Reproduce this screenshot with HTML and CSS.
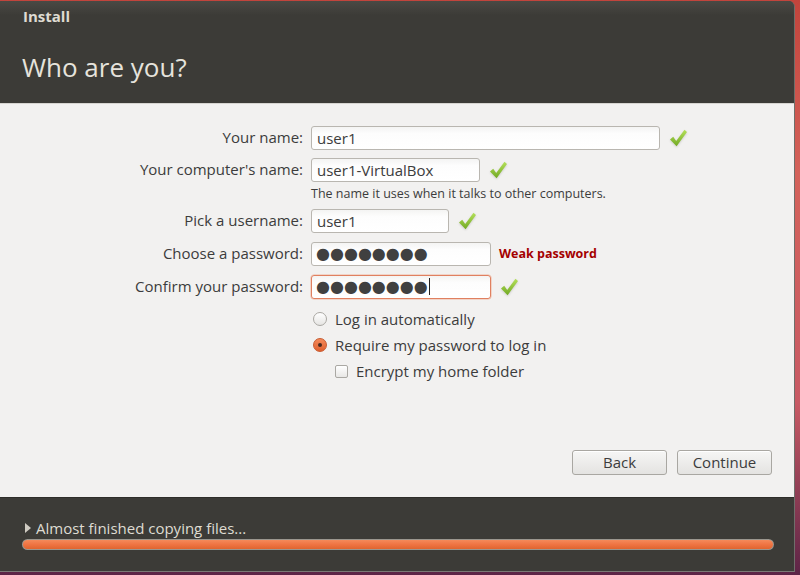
FILE: index.html
```html
<!DOCTYPE html>
<html>
<head>
<meta charset="utf-8">
<link rel="stylesheet" href="styles.css">
</head>
<body>
<div class="window">
  <div class="header">
    <div class="title">Install</div>
    <div class="heading">Who are you?</div>
  </div>
  <div class="content">
    <div class="form">
      <div class="row">
        <div class="label">Your name:</div>
        <div class="field"><div class="entry w-name">user1</div><svg class="check" viewBox="0 0 20 20"><path d="M2 11.5 L5.2 8.8 L8.2 13 L16.5 1.8 L19 4 L8.6 18.2 Z" fill="url(#g)"/></svg></div>
      </div>
      <div class="row">
        <div class="label">Your computer's name:</div>
        <div class="field"><div class="entry w-comp">user1-VirtualBox</div><svg class="check" viewBox="0 0 20 20"><path d="M2 11.5 L5.2 8.8 L8.2 13 L16.5 1.8 L19 4 L8.6 18.2 Z" fill="url(#g)"/></svg></div>
      </div>
      <div class="hint">The name it uses when it talks to other computers.</div>
      <div class="row">
        <div class="label">Pick a username:</div>
        <div class="field"><div class="entry w-user">user1</div><svg class="check" viewBox="0 0 20 20"><path d="M2 11.5 L5.2 8.8 L8.2 13 L16.5 1.8 L19 4 L8.6 18.2 Z" fill="url(#g)"/></svg></div>
      </div>
      <div class="row loose">
        <div class="label">Choose a password:</div>
        <div class="field"><div class="entry w-pass dots">●●●●●●●●</div><span class="weak">Weak password</span></div>
      </div>
      <div class="row loose">
        <div class="label">Confirm your password:</div>
        <div class="field"><div class="entry w-pass dots focus">●●●●●●●●<span class="cursor"></span></div><svg class="check" viewBox="0 0 20 20"><path d="M2 11.5 L5.2 8.8 L8.2 13 L16.5 1.8 L19 4 L8.6 18.2 Z" fill="url(#g)"/></svg></div>
      </div>
    </div>
    <div class="options">
      <div class="opt"><span class="radio"></span>Log in automatically</div>
      <div class="opt"><span class="radio on"></span>Require my password to log in</div>
      <div class="opt sub"><span class="checkbox"></span>Encrypt my home folder</div>
    </div>
    <div class="buttons">
      <div class="btn">Back</div>
      <div class="btn">Continue</div>
    </div>
  </div>
  <div class="footer">
    <div class="status"><span class="tri"></span>Almost finished copying files...</div>
    <div class="progress"><div class="bar"></div></div>
  </div>
</div>
<svg width="0" height="0" class="defs"><defs><linearGradient id="g" x1="0" y1="0" x2="0" y2="1"><stop offset="0" stop-color="#b4e05a"/><stop offset="1" stop-color="#72a923"/></linearGradient></defs></svg>
</body>
</html>
```
FILE: styles.css
```css
html, body { margin: 0; padding: 0; }
body {
  width: 800px; height: 575px; overflow: hidden;
  background: linear-gradient(180deg, #c2443c 0%, #d4625a 30%, #c85a64 70%, #5c2446 100%);
  font-family: "Open Sans", "DejaVu Sans", sans-serif;
}
.window {
  width: 794px; height: 570px; margin-top: 1px;
  border-right: 1px solid #6f6e6a; border-bottom: 1px solid #7a7975;
  border-top-right-radius: 6px;
  display: flex; flex-direction: column; overflow: hidden;
  background: #3c3b37;
}
.header {
  height: 102px; background: linear-gradient(180deg, #4a4944 0%, #3c3b37 14%, #3c3b37 100%);
  padding-left: 23px; box-sizing: border-box; color: #dfdbd2;
}
.title { font-weight: bold; font-size: 15px; padding-top: 5px; height: 22px; line-height: 20px; }
.heading { font-size: 26px; padding-top: 23px; line-height: 32px; margin-left: -1px; color: #e6e3dc; }
.content {
  height: 394px; background: #f2f1f0; border-top: 1px solid #d6d4d0; box-sizing: border-box;
  display: flex; flex-direction: column; padding: 22px 22px 22px 0;
  font-size: 15px; color: #3c3c3c;
}
.form { display: flex; flex-direction: column; gap: 9px; }
.row { display: flex; align-items: center; height: 23px; }
.row.loose { margin-top: 1px; }
.label { width: 303px; text-align: right; margin-right: 8px; line-height: 23px; }
.field { display: flex; align-items: center; height: 23px; }
.hint { font-size: 12.5px; line-height: 15px; margin: -4px 0 -1px 311px; }
.entry {
  box-sizing: border-box; height: 24px; border: 1px solid #b9b6b0; border-radius: 3px;
  background: linear-gradient(180deg, #f4f4f3 0%, #fdfdfd 30%, #ffffff 100%);
  padding: 0 5px; line-height: 22px; color: #3c3c3c; font-size: 15px;
}
.w-name { width: 349px; }
.w-comp { width: 169px; }
.w-user { width: 138px; }
.w-pass { width: 180px; }
.dots { font-family: "DejaVu Sans", sans-serif; font-size: 16px; letter-spacing: 0; color: #404040; padding-left: 4px; line-height: 21px; }
.focus { border-color: #e08060; box-shadow: 0 0 0 0.5px #f0b8a0; }
.cursor { display: inline-block; width: 1px; height: 17px; background: #222; vertical-align: -3px; margin-left: 1px; }
.check { width: 20px; height: 20px; margin-left: 8px; filter: drop-shadow(0 1px 1px rgba(0,0,0,0.15)); }
.weak { color: #a40000; font-weight: bold; font-size: 12.5px; margin-left: 8px; }
.options { padding-left: 311px; margin-top: 8px; }
.opt { height: 26px; display: flex; align-items: center; }
.opt.sub { padding-left: 22px; }
.radio {
  width: 14px; height: 14px; border-radius: 50%; border: 1px solid #aaa8a3; box-sizing: border-box;
  background: linear-gradient(180deg, #ffffff, #e6e5e3); margin: 0 8px 0 2px; position: relative;
}
.radio.on { background: linear-gradient(180deg, #f48a5a, #e0602e); border-color: #c85a30; }
.radio.on::after { content: ""; position: absolute; left: 4px; top: 4px; width: 4px; height: 4px; border-radius: 50%; background: #4a2a20; }
.checkbox {
  width: 13px; height: 13px; border: 1px solid #aaa8a3; border-radius: 2px; box-sizing: border-box;
  background: linear-gradient(180deg, #ffffff, #e8e7e5); margin: 0 8px 0 2px;
}
.buttons { margin-top: auto; display: flex; justify-content: flex-end; gap: 10px; }
.btn {
  width: 95px; height: 25px; box-sizing: border-box; border: 1px solid #a9a7a2; border-radius: 3px;
  background: linear-gradient(180deg, #f6f6f5 0%, #e4e3e1 100%);
  text-align: center; line-height: 23px; font-size: 15px; color: #3c3c3c;
  box-shadow: inset 0 1px 0 #ffffff;
}
.footer { flex: 1; background: #3c3b37; padding: 20px 22px 0 22px; border-top: 1px solid #2e2d2a; }
.status { color: #dfdbd2; font-size: 15px; line-height: 20px; height: 20px; display: flex; align-items: center; }
.tri { width: 0; height: 0; border-left: 6px solid #cfcbc2; border-top: 5px solid transparent; border-bottom: 5px solid transparent; margin: 0 5px 0 3px; }
.progress { margin-top: 1px; height: 11px; border-radius: 6px; background: #9a968e; padding: 1px; box-sizing: border-box; width: 752px; }
.bar { height: 9px; border-radius: 5px; background: linear-gradient(180deg, #f58a5a 0%, #ef7443 50%, #e0652f 100%); }
.defs { position: absolute; }
```
